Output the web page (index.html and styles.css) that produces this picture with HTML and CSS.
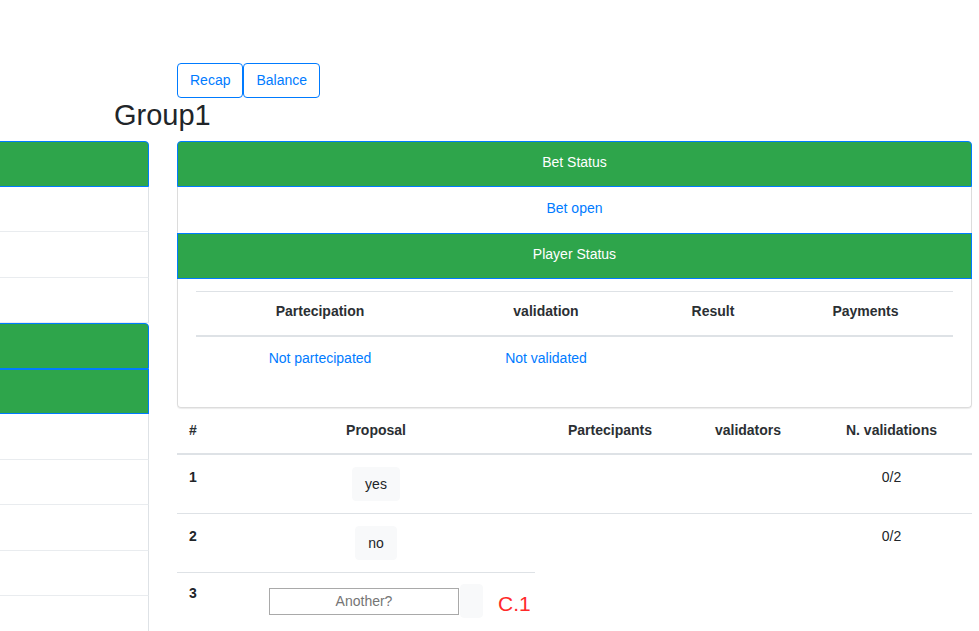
FILE: index.html
```html
<!DOCTYPE html>
<html lang="en">
<head>
<meta charset="utf-8">
<title>Group1</title>
<link rel="stylesheet" href="styles.css">
</head>
<body>
<div class="page">
  <div class="toolbar">
    <button class="btn-outline" type="button">Recap</button>
    <button class="btn-outline" type="button">Balance</button>
  </div>
  <h3 class="title">Group1</h3>
  <div class="main">
    <aside class="side">
      <div class="side-card">
        <div class="side-head first"></div>
        <div class="side-row"></div>
        <div class="side-row"></div>
        <div class="side-row"></div>
      </div>
      <div class="side-card">
        <div class="side-head first"></div>
        <div class="side-head"></div>
        <div class="side-row"></div>
        <div class="side-row"></div>
        <div class="side-row"></div>
        <div class="side-row"></div>
        <div class="side-row"></div>
      </div>
    </aside>
    <section class="content">
      <div class="status-card">
        <div class="card-head top">Bet Status</div>
        <div class="status-row">Bet open</div>
        <div class="card-head">Player Status</div>
        <div class="card-body">
          <table class="ptable">
            <colgroup>
              <col class="pc1"><col class="pc2"><col class="pc3"><col class="pc4">
            </colgroup>
            <thead>
              <tr><th>Partecipation</th><th>validation</th><th>Result</th><th>Payments</th></tr>
            </thead>
            <tbody>
              <tr><td class="link">Not partecipated</td><td class="link">Not validated</td><td></td><td></td></tr>
            </tbody>
          </table>
        </div>
      </div>
      <table class="proposals">
        <colgroup>
          <col class="c1"><col class="c2"><col class="c3"><col class="c4"><col class="c5">
        </colgroup>
        <thead>
          <tr><th class="left">#</th><th>Proposal</th><th>Partecipants</th><th>validators</th><th>N. validations</th></tr>
        </thead>
        <tbody>
          <tr class="first-row"><td class="num">1</td><td><span class="btn-light">yes</span></td><td></td><td></td><td>0/2</td></tr>
          <tr><td class="num">2</td><td><span class="btn-light">no</span></td><td></td><td></td><td>0/2</td></tr>
          <tr class="new-row">
            <td class="num">3</td>
            <td>
              <div class="input-group">
                <input class="new-input" type="text" placeholder="Another?">
                <span class="btn-light empty"></span>
                <span class="code">C.1</span>
              </div>
            </td>
          </tr>
        </tbody>
      </table>
    </section>
  </div>
</div>
</body>
</html>
```

FILE: styles.css
```css
* { box-sizing: border-box; }
html, body { margin: 0; padding: 0; overflow: hidden; }
body {
  font-family: "Liberation Sans", Arial, sans-serif;
  font-size: 14px;
  line-height: 1.5;
  color: #212529;
  background: #fff;
}

.toolbar {
  display: flex;
  padding-top: 63px;
  padding-left: 177px;
}
.btn-outline {
  font: inherit;
  font-size: 14px;
  line-height: 21px;
  height: 35px;
  padding: 6px 12px;
  color: #007bff;
  background: #fff;
  border: 1px solid #007bff;
  border-radius: 4px;
}

.title {
  margin: 0 0 9px 0;
  padding-left: 114px;
  font-size: 29px;
  font-weight: 400;
  line-height: 34px;
  color: #212529;
}

.main {
  display: flex;
  align-items: flex-start;
}

.side {
  flex: none;
  width: 169px;
  margin-left: -20px;
  margin-right: 28px;
}
.side-head {
  height: 45.5px;
  background: #2ea54b;
  border: 1px solid #007bff;
}
.side-head.first { border-radius: 0 4px 0 0; }
.side-row {
  height: 45.5px;
  border-right: 1px solid #dee2e6;
  border-bottom: 1px solid #e9ecef;
}

.content {
  flex: none;
  width: 795px;
}

.card-head {
  height: 46px;
  display: flex;
  align-items: center;
  justify-content: center;
  padding-bottom: 4px;
  background: #2ea54b;
  border: 1px solid #007bff;
  color: #fff;
}
.card-head.top { border-radius: 4px 4px 0 0; }
.status-row {
  height: 46px;
  display: flex;
  align-items: center;
  justify-content: center;
  padding-bottom: 4px;
  color: #007bff;
  border-left: 1px solid #dcdcdc;
  border-right: 1px solid #dcdcdc;
}
.card-body {
  height: 129px;
  padding: 12px 18px 0;
  border: 1px solid #dcdcdc;
  border-top: 0;
  border-radius: 0 0 4px 4px;
  box-shadow: 0 1px 1px rgba(0, 0, 0, 0.08);
}

.ptable {
  width: 757px;
  table-layout: fixed;
  border-collapse: separate;
  border-spacing: 0;
}
.pc1 { width: 248px; }
.pc2 { width: 204px; }
.pc3 { width: 130px; }
.pc4 { width: 175px; }
.ptable th {
  padding: 9px 12px 13px;
  border-top: 1px solid #dee2e6;
  border-bottom: 2px solid #dee2e6;
  font-weight: 700;
  text-align: center;
  line-height: 21px;
  color: #2b2f33;
}
.ptable td {
  padding: 11px 12px;
  text-align: center;
  line-height: 21px;
}
.link { color: #007bff; }

.proposals {
  width: 795px;
  table-layout: fixed;
  border-collapse: separate;
  border-spacing: 0;
}
.c1 { width: 40px; }
.c2 { width: 318px; }
.c3 { width: 150px; }
.c4 { width: 126px; }
.c5 { width: 161px; }
.proposals th {
  padding: 12px 12px 12px;
  border-bottom: 2px solid #dee2e6;
  font-weight: 700;
  text-align: center;
  line-height: 21px;
  color: #2b2f33;
}
.proposals th.left { text-align: left; }
.proposals td {
  padding: 12px;
  vertical-align: top;
  text-align: center;
  line-height: 21px;
  border-top: 1px solid #dee2e6;
}
.proposals .first-row td { border-top: 0; }
.proposals td.num {
  text-align: left;
  font-weight: 700;
}
.proposals .new-row td.num { padding-top: 10px; }

.btn-light {
  display: inline-block;
  height: 34px;
  padding: 6px 12px;
  line-height: 20px;
  background: #f8f9fa;
  border: 1px solid #f8f9fa;
  border-radius: 4px;
  color: #212529;
  vertical-align: top;
}
.btn-light.empty {
  width: 23px;
  padding: 0;
}

.input-group {
  position: relative;
  display: inline-flex;
  align-items: center;
  gap: 1px;
  vertical-align: top;
  margin-top: -1px;
}
.new-input {
  width: 190px;
  height: 27px;
  padding: 0 4px;
  border: 1px solid #a9a9a9;
  font-family: inherit;
  font-size: 14px;
  text-align: center;
  color: #212529;
  background: #fff;
}
.new-input::placeholder { color: #757575; }
.code {
  position: absolute;
  left: calc(100% + 15px);
  top: 8px;
  font-size: 21px;
  line-height: 24px;
  color: #ff2a2a;
  white-space: nowrap;
}
```
